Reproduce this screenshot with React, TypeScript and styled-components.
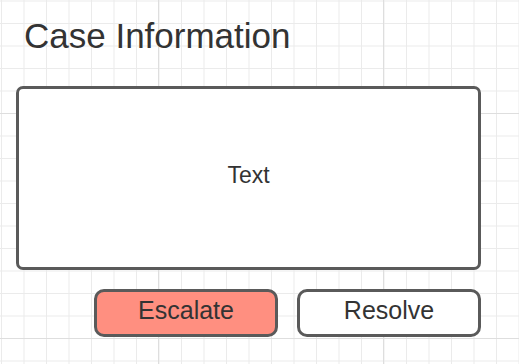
import React from "react";
import styled, { createGlobalStyle } from "styled-components";

const GlobalStyle = createGlobalStyle`
  html, body {
    margin: 0;
    padding: 0;
  }
  body {
    width: 519px;
    height: 364px;
    overflow: hidden;
    font-family: "Liberation Sans", Arial, sans-serif;
    background-color: #ffffff;
    background-image:
      linear-gradient(to right, #dedede 1px, transparent 1px),
      linear-gradient(to bottom, #dedede 1px, transparent 1px),
      linear-gradient(to right, #ebebeb 1px, transparent 1px),
      linear-gradient(to bottom, #ebebeb 1px, transparent 1px);
    background-size: 225px 225px, 225px 225px, 22.5px 22.5px, 22.5px 22.5px;
    background-position: 158px 0, 0 113px, 1px 0, 0 0.5px;
  }
`;

const Page = styled.div`
  display: flex;
  flex-direction: column;
  width: 465px;
  padding: 18px 0 0 16px;
`;

const Title = styled.h1`
  margin: 0 0 33px 8px;
  font-size: 35px;
  line-height: 35px;
  font-weight: 400;
  color: #333333;
`;

const TextBox = styled.div`
  box-sizing: border-box;
  height: 184px;
  border: 3px solid #5a5a5a;
  border-radius: 7px;
  background: #ffffff;
  display: flex;
  align-items: center;
  justify-content: center;
  font-size: 23px;
  color: #333333;
  padding-bottom: 6px;
`;

const ButtonRow = styled.div`
  display: flex;
  justify-content: flex-end;
  gap: 19px;
  margin-top: 19px;
`;

const Button = styled.button<{ $fill: string }>`
  box-sizing: border-box;
  width: 184px;
  height: 48px;
  border: 3px solid #5a5a5a;
  border-radius: 10px;
  background: ${(p) => p.$fill};
  font-family: "Liberation Sans", Arial, sans-serif;
  font-size: 25px;
  color: #333333;
  padding: 0 0 5px 0;
  display: flex;
  align-items: center;
  justify-content: center;
`;

export default function App() {
  return (
    <>
      <GlobalStyle />
      <Page>
        <Title>Case Information</Title>
        <TextBox>Text</TextBox>
        <ButtonRow>
          <Button $fill="#ff8f80">Escalate</Button>
          <Button $fill="#ffffff">Resolve</Button>
        </ButtonRow>
      </Page>
    </>
  );
}
